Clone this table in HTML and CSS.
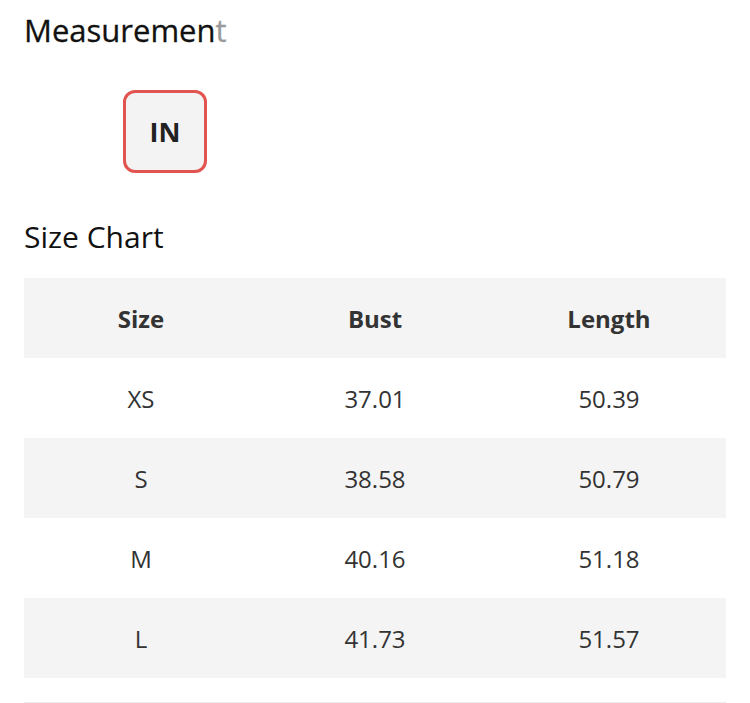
FILE: index.html
```html
<!DOCTYPE html>
<html>
<head>
<meta charset="utf-8">
<link rel="stylesheet" href="styles.css">
</head>
<body>
<div class="page">
  <h2 class="title main-title">Measuremen<span class="fade">t</span></h2>
  <div class="units">
    <button class="unit active">IN</button>
  </div>
  <h2 class="title chart-title">Size Chart</h2>
  <table class="chart">
    <thead>
      <tr><th>Size</th><th>Bust</th><th>Length</th></tr>
    </thead>
    <tbody>
      <tr><td>XS</td><td>37.01</td><td>50.39</td></tr>
      <tr><td>S</td><td>38.58</td><td>50.79</td></tr>
      <tr><td>M</td><td>40.16</td><td>51.18</td></tr>
      <tr><td>L</td><td>41.73</td><td>51.57</td></tr>
      <tr class="next"><td></td><td></td><td></td></tr>
    </tbody>
  </table>
</div>
</body>
</html>
```
FILE: styles.css
```css
html, body {
  margin: 0;
  padding: 0;
  background: #fff;
}
body {
  font-family: "Open Sans", "Liberation Sans", sans-serif;
  color: #222;
  overflow: hidden;
}
.page {
  padding: 10px 24px 0 24px;
}
.title {
  margin: 0;
  font-size: 30px;
  font-weight: 500;
  line-height: 40px;
  color: #111;
  letter-spacing: 0;
}
.main-title {
  font-size: 31px;
  -webkit-text-stroke: 0.3px #111;
}
.fade {
  color: #9a9a9a;
  -webkit-text-stroke: 0.3px #9a9a9a;
}
.units {
  display: flex;
  padding: 40px 0 0 99px;
  height: 83px;
}
.unit {
  width: 84px;
  height: 83px;
  box-sizing: border-box;
  border: 3px solid #e25450;
  border-radius: 12px;
  background: #f3f3f3;
  font-family: "Open Sans", "Liberation Sans", sans-serif;
  font-weight: 700;
  font-size: 27px;
  color: #222;
  padding: 0;
}
.chart-title {
  margin-top: 44px;
}
.chart {
  margin-top: 21px;
  width: 702px;
  border-collapse: collapse;
  table-layout: fixed;
}
.chart th, .chart td {
  height: 80px;
  padding: 0;
  text-align: center;
  font-size: 24px;
  color: #333;
}
.chart th {
  font-weight: 700;
  background: #f4f4f4;
}
.chart td {
  font-weight: 400;
}
.chart tbody tr:nth-child(even) td {
  background: #f4f4f4;
}
.chart tr.next td {
  height: 24px;
  border-bottom: 1px solid #ececec;
}
```
